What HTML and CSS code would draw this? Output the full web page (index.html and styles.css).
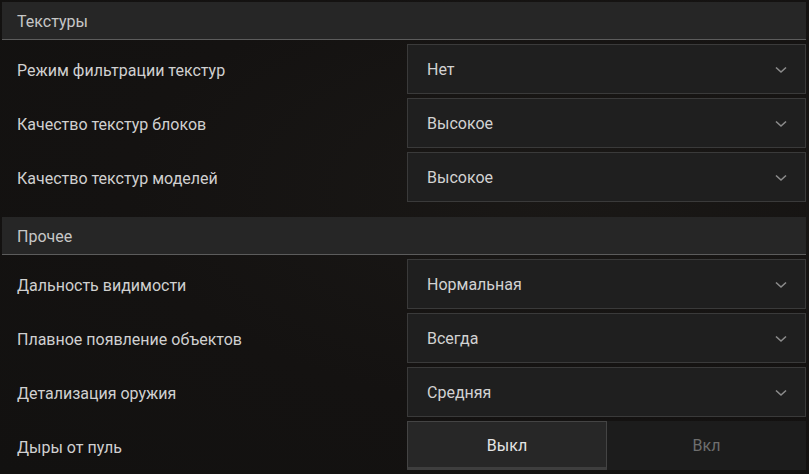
FILE: index.html
```html
<!DOCTYPE html>
<html lang="ru">
<head>
<meta charset="utf-8">
<link rel="stylesheet" href="styles.css">
</head>
<body>
<div class="panel">
  <section class="group">
    <div class="group-head">Текстуры</div>
    <div class="row">
      <div class="label">Режим фильтрации текстур</div>
      <div class="select"><span>Нет</span><svg class="chev" viewBox="0 0 12 8"><path d="M1 1.5 L6 6 L11 1.5"/></svg></div>
    </div>
    <div class="row">
      <div class="label">Качество текстур блоков</div>
      <div class="select"><span>Высокое</span><svg class="chev" viewBox="0 0 12 8"><path d="M1 1.5 L6 6 L11 1.5"/></svg></div>
    </div>
    <div class="row">
      <div class="label">Качество текстур моделей</div>
      <div class="select"><span>Высокое</span><svg class="chev" viewBox="0 0 12 8"><path d="M1 1.5 L6 6 L11 1.5"/></svg></div>
    </div>
  </section>
  <section class="group">
    <div class="group-head">Прочее</div>
    <div class="row">
      <div class="label">Дальность видимости</div>
      <div class="select"><span>Нормальная</span><svg class="chev" viewBox="0 0 12 8"><path d="M1 1.5 L6 6 L11 1.5"/></svg></div>
    </div>
    <div class="row">
      <div class="label">Плавное появление объектов</div>
      <div class="select"><span>Всегда</span><svg class="chev" viewBox="0 0 12 8"><path d="M1 1.5 L6 6 L11 1.5"/></svg></div>
    </div>
    <div class="row">
      <div class="label">Детализация оружия</div>
      <div class="select"><span>Средняя</span><svg class="chev" viewBox="0 0 12 8"><path d="M1 1.5 L6 6 L11 1.5"/></svg></div>
    </div>
    <div class="row">
      <div class="label">Дыры от пуль</div>
      <div class="toggle">
        <div class="opt active">Выкл</div>
        <div class="opt">Вкл</div>
      </div>
    </div>
  </section>
</div>
</body>
</html>
```
FILE: styles.css
```css
* { box-sizing: border-box; }
html, body {
  margin: 0;
  padding: 0;
  width: 809px;
  height: 474px;
  overflow: hidden;
}
body {
  background: radial-gradient(ellipse at 70% 40%, #1a1816 0%, #141211 55%, #121110 100%);
  font-family: Roboto, "Noto Sans", sans-serif;
  font-size: 16px;
  color: #cfcfcf;
}
.panel {
  padding: 2px 3px 0 2px;
  display: flex;
  flex-direction: column;
  gap: 15px;
}
.group {
  display: flex;
  flex-direction: column;
  gap: 4px;
}
.group-head {
  height: 38px;
  background: #262626;
  border-bottom: 1px solid #5c5c5c;
  padding-left: 15px;
  display: flex;
  align-items: center;
  color: #c6c6c6;
  padding-top: 1px;
}
.row {
  height: 50px;
  display: flex;
  align-items: stretch;
}
.label {
  width: 405px;
  padding-left: 15px;
  padding-top: 2px;
  display: flex;
  align-items: center;
  color: #d0d0d0;
}
.select {
  flex: 1;
  background: #1f1f1f;
  border: 1px solid #3a3a3a;
  display: flex;
  align-items: center;
  justify-content: space-between;
  padding: 1px 18px 0 19px;
  color: #d2d2d2;
}
.chev {
  width: 12px;
  height: 8px;
  fill: none;
  stroke: #8c8c8c;
  stroke-width: 1.6;
}
.toggle {
  flex: 1;
  display: flex;
  background: #1c1c1c;
  height: 49px;
}
.opt {
  flex: 1;
  display: flex;
  align-items: center;
  justify-content: center;
  color: #6e6e6e;
}
.opt.active {
  flex: 0 0 200px;
  background: #272727;
  border: 1px solid #444;
  border-bottom: 3px solid #3e3e3e;
  color: #e4e4e4;
  padding-top: 2px;
}
```
